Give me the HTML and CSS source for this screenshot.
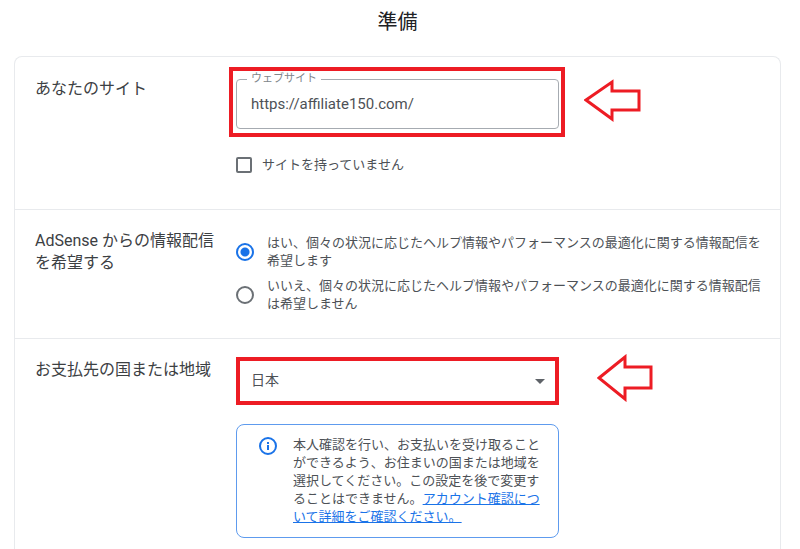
FILE: index.html
```html
<!DOCTYPE html>
<html lang="ja">
<head>
    <meta charset="UTF-8">
    <meta name="viewport" content="width=device-width, initial-scale=1">
    <title>準備</title>
    <link rel="stylesheet" href="styles.css">
</head>
<body>
    <main class="page">
        <h1>準備</h1>
        <form class="card">
            <!-- Site -->
            <section class="row">
                <h2>あなたのサイト</h2>
                <div class="content site">
                    <div class="field highlight">
                        <label class="field-label" for="website">ウェブサイト</label>
                        <input class="text-input" type="text" id="website" name="website" value="https://affiliate150.com/">
                        <svg class="arrow arrow-site" width="58" height="44" viewBox="0 0 58 44" aria-hidden="true">
                            <path d="M2 21 28 3V12H55V31H28V40Z"/>
                        </svg>
                    </div>
                    <label class="check">
                        <input type="checkbox" name="nosite">
                        <span>サイトを持っていません</span>
                    </label>
                </div>
            </section>

            <!-- Mail preference -->
            <section class="row">
                <h2>AdSense からの情報配信を希望する</h2>
                <div class="content mail">
                    <label class="radio">
                        <input type="radio" name="mail" value="yes" checked>
                        <span>はい、個々の状況に応じたヘルプ情報やパフォーマンスの最適化に関する情報配信を希望します</span>
                    </label>
                    <label class="radio">
                        <input type="radio" name="mail" value="no">
                        <span>いいえ、個々の状況に応じたヘルプ情報やパフォーマンスの最適化に関する情報配信は希望しません</span>
                    </label>
                </div>
            </section>

            <!-- Country -->
            <section class="row">
                <h2><label for="country">お支払先の国または地域</label></h2>
                <div class="content">
                    <div class="field">
                        <select class="country" id="country" name="country">
                            <option value="JP">日本</option>
                        </select>
                        <svg class="caret" width="10" height="5" viewBox="0 0 10 5" aria-hidden="true">
                            <path d="M0 0H10L5 5Z"/>
                        </svg>
                        <svg class="arrow arrow-country" width="58" height="48" viewBox="0 0 58 48" aria-hidden="true">
                            <path d="M2 24 28 3V13H54V34H28V45Z"/>
                        </svg>
                    </div>
                    <div class="info">
                        <svg class="info-icon" width="20" height="20" viewBox="0 0 20 20" aria-hidden="true">
                            <circle cx="10" cy="10" r="8"/>
                            <path d="M10 9V14M10 6V8"/>
                        </svg>
                        <p>本人確認を行い、お支払いを受け取ることができるよう、お住まいの国または地域を選択してください。この設定を後で変更することはできません。<a href="#">アカウント確認について詳細をご確認ください。</a></p>
                    </div>
                </div>
            </section>
        </form>
    </main>
</body>
</html>
```
FILE: styles.css
```css
* {
    box-sizing: border-box;
}

body {
    margin: 0;
    background-color: #fff;
    color: #4d5156;
    font-family: Roboto, "Noto Sans CJK JP", sans-serif;
    font-size: 13px;
    line-height: 18px;
}

.page {
    padding: 10px 19px 0 14px;
}

h1 {
    margin: 0 0 22px;
    color: #202124;
    font-size: 20px;
    font-weight: 400;
    line-height: 24px;
    text-align: center;
}

.card {
    border: 1px solid #e8eaed;
    border-bottom: none;
    border-radius: 8px 8px 0 0;
}

.row {
    display: grid;
    grid-template-columns: 181px 1fr;
    column-gap: 20px;
    padding: 19px 14px 24px 20px;
}

.row + .row {
    padding-top: 18px;
    border-top: 1px solid #e8eaed;
}

h2 {
    margin: 0;
    padding-top: 2px;
    color: #3c4043;
    font-size: 16px;
    font-weight: 400;
    line-height: 22px;
}

.site {
    padding-top: 3px;
}

.mail {
    display: grid;
    row-gap: 7px;
    padding: 6px 0 1px;
}

.field {
    position: relative;
    width: 100%;
    max-width: 323px;
}

/* Website text box */
.field-label {
    position: absolute;
    top: -8px;
    left: 11px;
    padding: 0 4px;
    background-color: #fff;
    color: #80868b;
    font-size: 11px;
    line-height: 16px;
}

.text-input {
    display: block;
    width: 100%;
    height: 50px;
    padding: 0 14px;
    border: 1px solid #a6abb1;
    border-radius: 4px;
    background-color: #fff;
    color: #4d5156;
    font-family: inherit;
    font-size: 15px;
}

.highlight::after {
    content: "";
    position: absolute;
    inset: -12px -6px -8px -7px;
    border: 4px solid #ed1c24;
    pointer-events: none;
}

.arrow {
    position: absolute;
    fill: #fff;
    stroke: #ed1c24;
    stroke-width: 3;
}

.arrow-site {
    top: 0;
    left: calc(100% + 25px);
}

.arrow-country {
    top: -3px;
    left: calc(100% + 38px);
}

/* Check box and radio buttons */
.check,
.radio {
    display: flex;
    align-items: center;
}

.check {
    gap: 10px;
    height: 40px;
    margin-top: 16px;
}

.radio {
    gap: 13px;
}

.check input,
.radio input {
    appearance: none;
    flex: none;
    margin: 0;
    border: 2px solid #6b7075;
}

.check input {
    width: 16px;
    height: 16px;
    border-radius: 2px;
}

.radio input {
    width: 18px;
    height: 18px;
    border-radius: 50%;
}

.radio input:checked {
    border-color: #1a73e8;
    background: radial-gradient(circle, #1a73e8 4px, #fff 5px);
}

/* Country */
.country {
    appearance: none;
    display: block;
    width: 100%;
    height: 48px;
    padding: 0 11px 3px;
    border: 4px solid #ed1c24;
    border-radius: 0;
    background-color: #fff;
    color: #4d5156;
    font-family: inherit;
    font-size: 14px;
}

.caret {
    position: absolute;
    top: 22px;
    right: 14px;
    fill: #5f6368;
}

.info {
    display: flex;
    gap: 15px;
    max-width: 323px;
    margin-top: 19px;
    padding: 11px 12px 11px 21px;
    border: 1px solid #5e9bee;
    border-radius: 8px;
}

.info-icon {
    flex: none;
    fill: none;
    stroke: #1a73e8;
    stroke-width: 2;
}

.info p {
    margin: 0;
}

.info a {
    color: #1a73e8;
}
```
